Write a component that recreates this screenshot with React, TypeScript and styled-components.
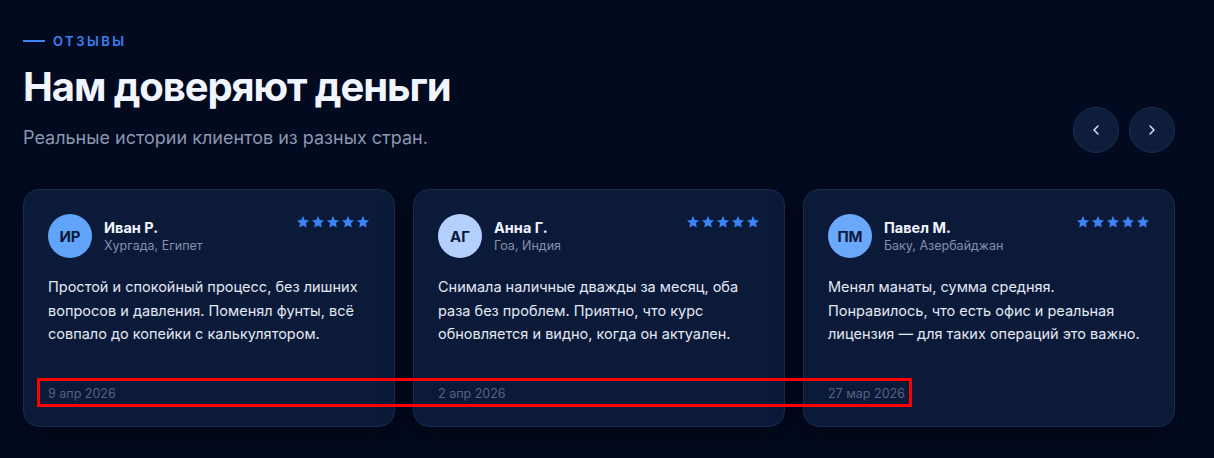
import React from "react";
import styled, { createGlobalStyle } from "styled-components";

const Global = createGlobalStyle`
  html, body { margin: 0; padding: 0; background: #020a1f; }
  body { font-family: Inter, "Noto Sans", sans-serif; -webkit-font-smoothing: antialiased; }
  * { box-sizing: border-box; }
`;

const Section = styled.section`
  width: 1214px;
  height: 458px;
  background: #020a1f;
  padding: 33px 0 0 23px;
  overflow: hidden;
`;

const Container = styled.div`
  width: 1152px;
`;

const Header = styled.div`
  display: flex;
  align-items: flex-end;
  justify-content: space-between;
`;

const HeadText = styled.div`
  display: flex;
  flex-direction: column;
`;

const Eyebrow = styled.div`
  display: flex;
  align-items: center;
  gap: 8px;
  color: #3b82f6;
  font-size: 13px;
  font-weight: 600;
  letter-spacing: 2.5px;
  line-height: 16px;
  &::before {
    content: "";
    width: 22px;
    height: 2px;
    background: #3b82f6;
  }
`;

const Title = styled.h2`
  margin: 14px 0 0;
  color: #f1f5ff;
  font-size: 40px;
  font-weight: 700;
  letter-spacing: -1.1px;
  line-height: 48px;
`;

const Subtitle = styled.p`
  margin: 14px 0 0;
  color: #8b97b0;
  font-size: 18px;
  line-height: 26px;
`;

const Nav = styled.div`
  display: flex;
  gap: 10px;
  margin-bottom: -2px;
`;

const NavButton = styled.button`
  width: 46px;
  height: 46px;
  border-radius: 50%;
  background: #0f1d3d;
  border: 1px solid #1f2d50;
  color: #e6ecf8;
  display: flex;
  align-items: center;
  justify-content: center;
  padding: 0;
  cursor: pointer;
`;

const CardsWrap = styled.div`
  position: relative;
  margin-top: 38px;
`;

const Cards = styled.div`
  display: grid;
  grid-template-columns: repeat(3, 372px);
  gap: 18px;
`;

const Card = styled.article`
  background: #0c1a3a;
  border: 1px solid #1b2a4e;
  border-radius: 16px;
  padding: 24px 24px 24px;
  height: 238px;
  display: flex;
  flex-direction: column;
  box-shadow: 0 10px 30px rgba(0, 0, 0, 0.35);
`;

const CardTop = styled.div`
  display: flex;
  align-items: flex-start;
  justify-content: space-between;
`;

const Person = styled.div`
  display: flex;
  align-items: center;
  gap: 12px;
`;

const Avatar = styled.div<{ $bg: string }>`
  width: 44px;
  height: 44px;
  border-radius: 50%;
  background: ${(p) => p.$bg};
  color: #0b1838;
  font-size: 15px;
  font-weight: 700;
  display: flex;
  align-items: center;
  justify-content: center;
`;

const Who = styled.div`
  display: flex;
  flex-direction: column;
  gap: 1px;
`;

const Name = styled.div`
  color: #f1f5ff;
  font-size: 14.5px;
  font-weight: 700;
  line-height: 18px;
`;

const Place = styled.div`
  color: #8590a8;
  font-size: 12.5px;
  line-height: 16px;
`;

const Stars = styled.div`
  display: flex;
  gap: 1px;
  margin-top: 1px;
`;

const Text = styled.p`
  margin: 17px 0 0;
  color: #e3e8f3;
  font-size: 14.5px;
  line-height: 23.5px;
`;

const DateText = styled.div`
  margin-top: auto;
  color: #56627e;
  font-size: 12.5px;
  line-height: 16px;
`;

const Highlight = styled.div`
  position: absolute;
  left: 14px;
  top: 189px;
  width: 875px;
  height: 29px;
  border: 3px solid #ff0000;
  pointer-events: none;
`;

const Star = () => (
  <svg width="14" height="14" viewBox="0 0 24 24" fill="#3b82f6">
    <path d="M12 1.8l3.1 6.6 7.2.9-5.3 5 1.4 7.1L12 17.9l-6.4 3.5 1.4-7.1-5.3-5 7.2-.9z" />
  </svg>
);

const reviews = [
  {
    initials: "ИР",
    bg: "#60a5fa",
    name: "Иван Р.",
    place: "Хургада, Египет",
    text: "Простой и спокойный процесс, без лишних вопросов и давления. Поменял фунты, всё совпало до копейки с калькулятором.",
    date: "9 апр 2026",
  },
  {
    initials: "АГ",
    bg: "#b4d0ff",
    name: "Анна Г.",
    place: "Гоа, Индия",
    text: "Снимала наличные дважды за месяц, оба раза без проблем. Приятно, что курс обновляется и видно, когда он актуален.",
    date: "2 апр 2026",
  },
  {
    initials: "ПМ",
    bg: "#6aa8fc",
    name: "Павел М.",
    place: "Баку, Азербайджан",
    text: "Менял манаты, сумма средняя. Понравилось, что есть офис и реальная лицензия — для таких операций это важно.",
    date: "27 мар 2026",
  },
];

export default function App() {
  return (
    <>
      <Global />
      <Section>
        <Container>
          <Header>
            <HeadText>
              <Eyebrow>ОТЗЫВЫ</Eyebrow>
              <Title>Нам доверяют деньги</Title>
              <Subtitle>Реальные истории клиентов из разных стран.</Subtitle>
            </HeadText>
            <Nav>
              <NavButton aria-label="Назад">
                <svg width="16" height="16" viewBox="0 0 24 24" fill="none" stroke="currentColor" strokeWidth="2" strokeLinecap="round" strokeLinejoin="round">
                  <path d="M15 18l-6-6 6-6" />
                </svg>
              </NavButton>
              <NavButton aria-label="Вперёд">
                <svg width="16" height="16" viewBox="0 0 24 24" fill="none" stroke="currentColor" strokeWidth="2" strokeLinecap="round" strokeLinejoin="round">
                  <path d="M9 18l6-6-6-6" />
                </svg>
              </NavButton>
            </Nav>
          </Header>
          <CardsWrap>
            <Cards>
              {reviews.map((r) => (
                <Card key={r.name}>
                  <CardTop>
                    <Person>
                      <Avatar $bg={r.bg}>{r.initials}</Avatar>
                      <Who>
                        <Name>{r.name}</Name>
                        <Place>{r.place}</Place>
                      </Who>
                    </Person>
                    <Stars>
                      <Star />
                      <Star />
                      <Star />
                      <Star />
                      <Star />
                    </Stars>
                  </CardTop>
                  <Text>{r.text}</Text>
                  <DateText>{r.date}</DateText>
                </Card>
              ))}
            </Cards>
            <Highlight />
          </CardsWrap>
        </Container>
      </Section>
    </>
  );
}
